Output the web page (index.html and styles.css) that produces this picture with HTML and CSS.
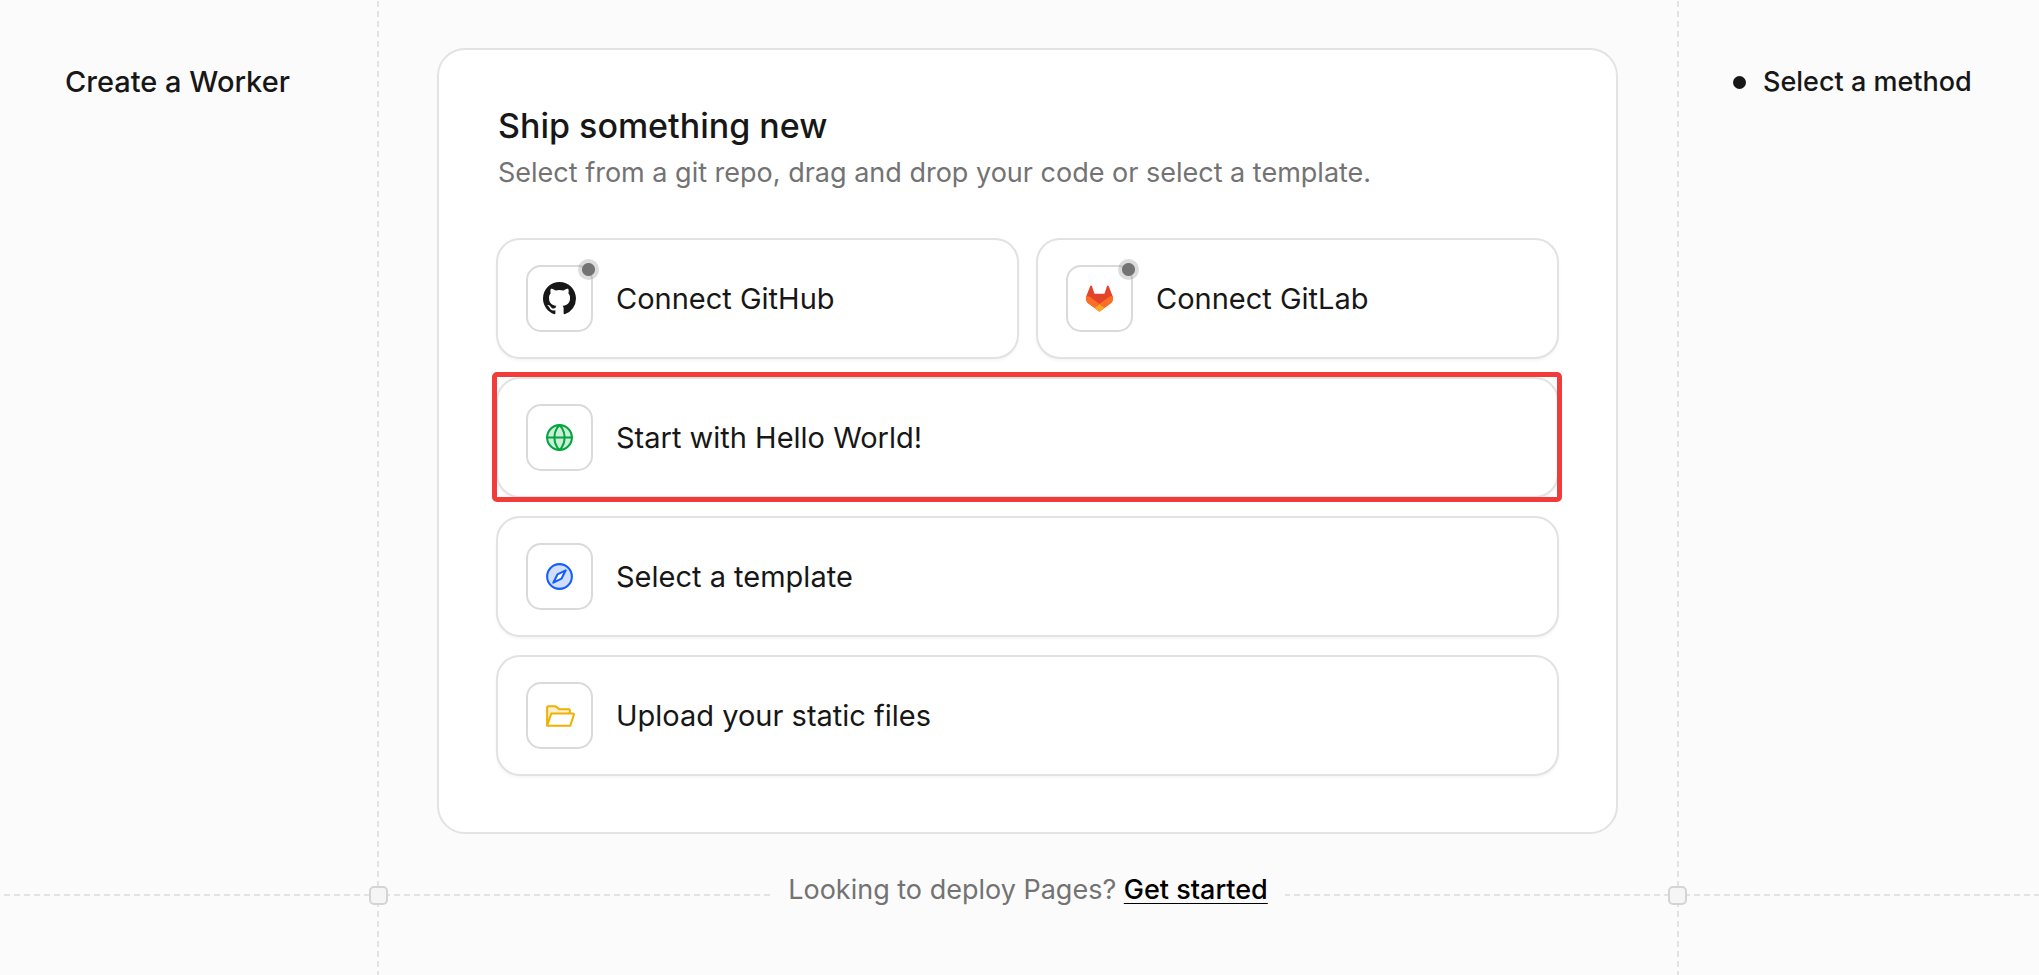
FILE: index.html
```html
<!DOCTYPE html>
<html lang="en">
<head>
    <meta charset="UTF-8">
    <meta name="viewport" content="width=device-width, initial-scale=1.0">
    <title>Create a Worker</title>
    <link rel="stylesheet" href="styles.css">
</head>
<body>
    <div class="page">
        <header class="side">
            <h1>Create a Worker</h1>
        </header>

        <main class="stage">
            <section class="card">
                <div class="card-head">
                    <h2>Ship something new</h2>
                    <p>Select from a git repo, drag and drop your code or select a template.</p>
                </div>

                <div class="options">
                    <button type="button" class="option">
                        <span class="icon">
                            <svg class="icon-brand" viewBox="0 0 16 16" fill="#171717" aria-hidden="true">
                                <path d="M8 0C3.58 0 0 3.58 0 8c0 3.54 2.29 6.53 5.47 7.59.4.07.55-.17.55-.38 0-.19-.01-.82-.01-1.49-2.01.37-2.53-.49-2.69-.94-.09-.23-.48-.94-.82-1.13-.28-.15-.68-.52-.01-.53.63-.01 1.08.58 1.23.82.72 1.21 1.87.87 2.33.66.07-.52.28-.87.51-1.07-1.78-.2-3.64-.89-3.64-3.95 0-.87.31-1.59.82-2.15-.08-.2-.36-1.02.08-2.12 0 0 .67-.21 2.2.82.64-.18 1.32-.27 2-.27s1.36.09 2 .27c1.53-1.04 2.2-.82 2.2-.82.44 1.1.16 1.92.08 2.12.51.56.82 1.27.82 2.15 0 3.07-1.87 3.75-3.65 3.95.29.25.54.73.54 1.48 0 1.07-.01 1.93-.01 2.2 0 .21.15.46.55.38A8.01 8.01 0 0 0 16 8c0-4.42-3.58-8-8-8z"/>
                            </svg>
                            <span class="status"></span>
                        </span>
                        Connect GitHub
                    </button>

                    <button type="button" class="option">
                        <span class="icon">
                            <svg class="icon-gitlab" viewBox="0 0 25 24" aria-hidden="true">
                                <path fill="#E24329" d="M24.507 9.5l-.034-.09L21.082.562a.896.896 0 0 0-1.694.091l-2.29 7.01H7.825L5.535.653a.898.898 0 0 0-1.694-.09L.451 9.411.416 9.5a6.297 6.297 0 0 0 2.09 7.278l.012.01.03.022 5.16 3.867 2.56 1.935 1.554 1.176a1.051 1.051 0 0 0 1.268 0l1.555-1.176 2.56-1.935 5.197-3.89.014-.01A6.297 6.297 0 0 0 24.507 9.5z"/>
                                <path fill="#FC6D26" d="M24.507 9.5l-.034-.09a11.44 11.44 0 0 0-4.56 2.051l-7.447 5.632 4.742 3.584 5.197-3.89.014-.01A6.297 6.297 0 0 0 24.507 9.5z"/>
                                <path fill="#FCA326" d="M7.707 20.677l2.56 1.935 1.555 1.176a1.051 1.051 0 0 0 1.268 0l1.555-1.176 2.56-1.935-4.743-3.584-4.755 3.584z"/>
                                <path fill="#FC6D26" d="M5.01 11.461a11.43 11.43 0 0 0-4.56-2.05L.416 9.5a6.297 6.297 0 0 0 2.09 7.278l.012.01.03.022 5.16 3.867 4.745-3.584-7.444-5.632z"/>
                            </svg>
                            <span class="status"></span>
                        </span>
                        Connect GitLab
                    </button>

                    <button type="button" class="option wide highlighted">
                        <span class="icon green">
                            <svg class="icon-line" viewBox="0 0 256 256" aria-hidden="true">
                                <circle class="tint" cx="128" cy="128" r="96"/>
                                <circle cx="128" cy="128" r="96"/>
                                <path d="M168 128c0 64-40 96-40 96s-40-32-40-96 40-96 40-96 40 32 40 96zM32 128h192"/>
                            </svg>
                        </span>
                        Start with Hello World!
                    </button>

                    <button type="button" class="option wide">
                        <span class="icon blue">
                            <svg class="icon-line" viewBox="0 0 256 256" aria-hidden="true">
                                <path class="tint" fill-rule="evenodd" d="M128 32a96 96 0 1 0 0 192 96 96 0 0 0 0-192zM144 144l-64 32 32-64 64-32z"/>
                                <circle cx="128" cy="128" r="96"/>
                                <path d="M144 144l-64 32 32-64 64-32z"/>
                            </svg>
                        </span>
                        Select a template
                    </button>

                    <button type="button" class="option wide">
                        <span class="icon yellow">
                            <svg class="icon-line" viewBox="0 0 256 256" aria-hidden="true">
                                <path class="tint" d="M208 88v24H69.8a8 8 0 0 0-7.6 5.5L32 208V64a8 8 0 0 1 8-8h53.3a8 8 0 0 1 4.8 1.6l27.8 20.8a8 8 0 0 0 4.8 1.6H200a8 8 0 0 1 8 8z"/>
                                <path d="M32 208l30.2-90.5a8 8 0 0 1 7.6-5.5H232a8 8 0 0 1 7.6 10.5L211.1 208H32V64a8 8 0 0 1 8-8h53.3a8 8 0 0 1 4.8 1.6l27.8 20.8a8 8 0 0 0 4.8 1.6H200a8 8 0 0 1 8 8v24"/>
                            </svg>
                        </span>
                        Upload your static files
                    </button>
                </div>
            </section>
        </main>

        <aside class="side steps-side">
            <ol class="steps">
                <li>Select a method</li>
            </ol>
        </aside>

        <footer class="rule">
            <div class="rule-center">
                <p class="prompt">Looking to deploy Pages? <a href="#">Get started</a></p>
            </div>
        </footer>
    </div>
</body>
</html>
```
FILE: styles.css
```css
*,
*::before,
*::after {
    margin: 0;
    padding: 0;
    box-sizing: border-box;
}

:root {
    --left: 377px;
    --right: 360px;
    --line: #e3e3e3;
}

body {
    font-family: 'Inter', sans-serif;
    background: #fbfbfb;
    color: #171717;
}

/* Three columns, with a dashed guide on each side of the middle one */
.page {
    display: grid;
    grid-template-columns: var(--left) minmax(0, 1fr) var(--right);
    grid-template-rows: auto auto 1fr;
    min-height: 100vh;
    background-image:
        repeating-linear-gradient(to bottom, transparent 0 1px, var(--line) 1px 7px, transparent 7px 10px),
        repeating-linear-gradient(to bottom, transparent 0 1px, var(--line) 1px 7px, transparent 7px 10px);
    background-size: 2px 100%;
    background-position: var(--left) 0, right var(--right) top;
    background-repeat: no-repeat;
}

.side {
    padding: 62px 65px;
}

h1 {
    font-size: 29px;
    font-weight: 500;
    line-height: 40px;
}

.stage {
    padding: 48px 61px 41px 60px;
}

.card {
    padding: 54px 57px 56px;
    background: #fff;
    border: 2px solid var(--line);
    border-radius: 28px;
}

.card-head {
    padding-left: 2px;
    margin-bottom: 44px;
}

.card-head h2 {
    font-size: 34px;
    font-weight: 500;
    line-height: 44px;
    margin-bottom: 4px;
}

.card-head p {
    font-size: 27px;
    line-height: 42px;
    color: #737373;
}

.options {
    display: grid;
    grid-template-columns: 1fr 1fr;
    gap: 18px 17px;
}

.option {
    position: relative;
    display: flex;
    align-items: center;
    gap: 23px;
    padding: 25px 28px;
    background: #fff;
    border: 2px solid #e2e2e2;
    border-radius: 24px;
    box-shadow: 0 2px 3px rgba(0, 0, 0, 0.04);
    font: 400 29px/40px 'Inter', sans-serif;
    color: #171717;
    text-align: left;
    cursor: pointer;
}

.option.wide {
    grid-column: 1 / -1;
}

.option:hover {
    background: #fafafa;
}

/* Red frame around the suggested choice */
.highlighted::after {
    content: '';
    position: absolute;
    inset: -7px -5px -6px -6px;
    border: 5px solid #f23c3c;
    border-radius: 5px;
}

.icon {
    position: relative;
    display: flex;
    align-items: center;
    justify-content: center;
    width: 67px;
    height: 67px;
    border: 2px solid #dadada;
    border-radius: 15px;
}

.icon-brand,
.icon-line {
    width: 33px;
    height: 33px;
}

.icon-gitlab {
    width: 27px;
    height: 27px;
}

.icon-line {
    fill: none;
    stroke: currentColor;
    stroke-width: 16;
    stroke-linecap: round;
    stroke-linejoin: round;
}

.tint {
    fill: currentColor;
    stroke: none;
    opacity: 0.2;
}

.green {
    color: #00a63e;
}

.blue {
    color: #155dfc;
}

.yellow {
    color: #f0b100;
}

.status {
    position: absolute;
    top: -8px;
    right: -8px;
    width: 21px;
    height: 21px;
    border-radius: 50%;
    background: radial-gradient(circle, #737373 6px, rgba(115, 115, 115, 0.25) 7px);
}

.steps-side {
    padding: 62px 54px;
}

.steps {
    list-style: none;
}

.steps li {
    display: flex;
    align-items: center;
    gap: 17px;
    font-size: 27px;
    font-weight: 500;
    line-height: 40px;
    white-space: nowrap;
}

.steps li::before {
    content: '';
    width: 13px;
    height: 13px;
    border-radius: 50%;
    background: #171717;
}

/* Horizontal guide with a square where it meets each vertical one */
.rule {
    grid-column: 1 / -1;
    padding: 0 var(--right) 0 var(--left);
    background: repeating-linear-gradient(to right, transparent 0 4px, var(--line) 4px 10px) 0 center / 100% 2px no-repeat;
}

.rule-center {
    position: relative;
    display: flex;
    justify-content: center;
}

.rule-center::before,
.rule-center::after {
    content: '';
    position: absolute;
    top: 11px;
    width: 19px;
    height: 19px;
    background: #f5f5f5;
    border: 2px solid #d4d4d4;
    border-radius: 5px;
}

.rule-center::before {
    left: -8px;
}

.rule-center::after {
    right: -8px;
}

.prompt {
    padding: 0 17px 10px;
    background: #fbfbfb;
    font-size: 27px;
    line-height: 30px;
    color: #737373;
}

.prompt a {
    color: #000;
    font-weight: 500;
    text-decoration: underline;
    text-decoration-thickness: 1px;
    text-underline-offset: 4px;
}
```
